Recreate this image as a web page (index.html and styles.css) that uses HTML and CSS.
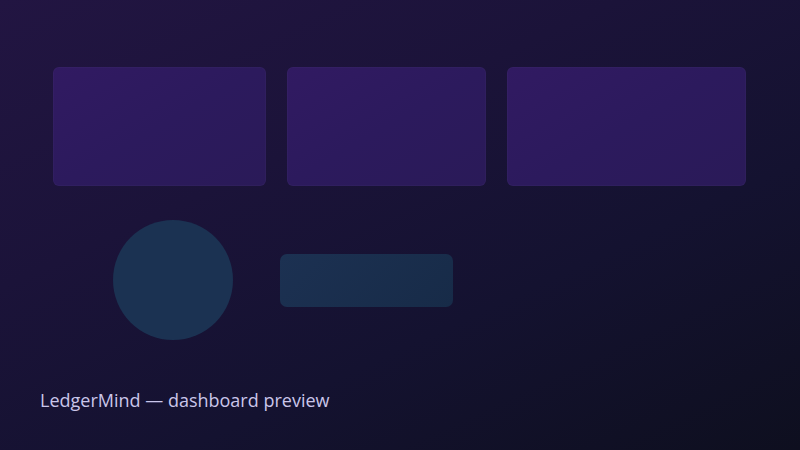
FILE: index.html
```html
<!DOCTYPE html>
<html>
<head>
<meta charset="utf-8">
<link rel="stylesheet" href="styles.css">
</head>
<body>
<div class="page">
  <div class="cards">
    <div class="card c1"></div>
    <div class="card c2"></div>
    <div class="card c3"></div>
  </div>
  <div class="row">
    <div class="circle"></div>
    <div class="bar"></div>
  </div>
  <div class="caption">LedgerMind — dashboard preview</div>
</div>
</body>
</html>
```
FILE: styles.css
```css
html, body {
  margin: 0;
  padding: 0;
  width: 800px;
  height: 450px;
  overflow: hidden;
}
body {
  background: linear-gradient(155deg, #221542 0%, #1b1339 35%, #141230 65%, #0e0f1f 100%);
  font-family: "Open Sans", "Noto Sans", sans-serif;
}
.page {
  width: 800px;
  height: 450px;
  box-sizing: border-box;
  padding-top: 67px;
  display: flex;
  flex-direction: column;
}
.cards {
  display: flex;
  gap: 21px;
  padding-left: 53px;
}
.card {
  height: 119px;
  border-radius: 6px;
  background: linear-gradient(150deg, #311a62 0%, #2c1a5d 50%, #2a1a58 100%);
  box-shadow: inset 0 0 0 1px rgba(255, 255, 255, 0.025);
}
.c1 { width: 213px; }
.c2 { width: 199px; }
.c3 { width: 239px; }
.row {
  display: flex;
  align-items: center;
  margin-top: 34px;
  padding-left: 113px;
  gap: 47px;
}
.circle {
  width: 120px;
  height: 120px;
  border-radius: 50%;
  background: #1b3252;
}
.bar {
  width: 173px;
  height: 53px;
  border-radius: 7px;
  background: linear-gradient(135deg, #1c3152 0%, #172b48 100%);
}
.caption {
  margin-top: 48px;
  padding-left: 40px;
  font-size: 18px;
  font-weight: 500;
  color: #cac6ea;
  line-height: 24px;
}
```
